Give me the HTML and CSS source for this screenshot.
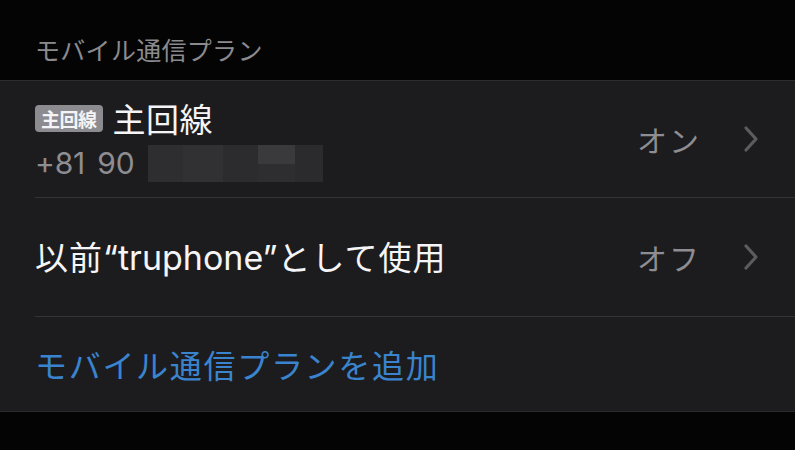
FILE: index.html
```html
<!DOCTYPE html>
<html lang="ja">
<head>
<meta charset="utf-8">
<link rel="stylesheet" href="styles.css">
</head>
<body>
<div class="screen">
  <div class="section-header">モバイル通信プラン</div>
  <div class="card">
    <div class="row row-tall">
      <div class="row-main">
        <div class="title-line">
          <span class="badge">主回線</span>
          <span class="title">主回線</span>
        </div>
        <div class="sub-line">
          <span class="number">+81 90</span>
          <span class="blur">
            <span class="b b1"></span><span class="b b2"></span><span class="b b3"></span><span class="b b4"></span><span class="b b5"></span>
          </span>
        </div>
      </div>
      <div class="detail">
        <span class="value">オン</span>
        <svg class="chev" width="20" height="28" viewBox="0 0 20 28"><polyline points="5,3 15,14 5,25" fill="none" stroke="#5b5b60" stroke-width="3.2" stroke-linecap="round" stroke-linejoin="round"/></svg>
      </div>
    </div>
    <div class="row row-mid">
      <div class="row-main">
        <span class="title title-wide">以前<span class="latin">“truphone”</span>として使用</span>
      </div>
      <div class="detail">
        <span class="value">オフ</span>
        <svg class="chev" width="20" height="28" viewBox="0 0 20 28"><polyline points="5,3 15,14 5,25" fill="none" stroke="#5b5b60" stroke-width="3.2" stroke-linecap="round" stroke-linejoin="round"/></svg>
      </div>
    </div>
    <div class="row row-last">
      <span class="link">モバイル通信プランを追加</span>
    </div>
  </div>
</div>
</body>
</html>
```
FILE: styles.css
```css
* { box-sizing: border-box; }
html, body { margin: 0; padding: 0; }
body {
  background: #040404;
  width: 795px;
  height: 450px;
  overflow: hidden;
  font-family: "Noto Sans CJK JP", "Noto Sans", sans-serif;
}
.screen { display: flex; flex-direction: column; }
.section-header {
  height: 80px;
  padding: 31px 0 0 35px;
  font-size: 25px;
  line-height: 36px;
  color: #8a8a8f;
  letter-spacing: 0.3px;
}
.card {
  background: #1c1c1e;
  border-top: 1px solid #2c2c2f;
  border-bottom: 1px solid #2a2a2d;
  display: flex;
  flex-direction: column;
}
.row {
  display: flex;
  align-items: center;
  margin-left: 35px;
  padding-right: 34px;
}
.row-tall { height: 117px; border-bottom: 1px solid #343437; }
.row-mid { height: 119px; border-bottom: 1px solid #343437; }
.row-last { height: 94px; }
.row-main { flex: 1; display: flex; flex-direction: column; }
.title-line { display: flex; align-items: center; gap: 10px; }
.badge {
  background: #8b8b90;
  color: #f4f4f6;
  font-size: 19px;
  font-weight: 700;
  line-height: 27px;
  padding: 0 6px;
  border-radius: 4px;
  letter-spacing: -0.5px;
}
.title {
  color: #f5f5f7;
  font-size: 33px;
  line-height: 44px;
  letter-spacing: 0.5px;
}
.title-wide { letter-spacing: 1px; }
.latin { font-family: "Inter", "Noto Sans CJK JP", sans-serif; font-size: 34px; letter-spacing: 0; }
.sub-line { display: flex; align-items: center; gap: 14px; margin-top: 4px; }
.number {
  font-family: "Inter", "Noto Sans", sans-serif;
  color: #8d8d92;
  font-size: 30px;
  line-height: 38px;
  letter-spacing: -0.2px;
  word-spacing: 4px;
}
.blur {
  display: flex;
  height: 37px;
  width: 175px;
  background: #29292c;
}
.b { display: block; height: 100%; }
.b1 { width: 35px; background: #2e2e31; }
.b2 { width: 40px; background: #313134; }
.b3 { width: 35px; background: #2c2c2f; }
.b4 { width: 37px; background: linear-gradient(#3a3a3d 0 50%, #2e2e31 50% 100%); }
.b5 { width: 28px; background: #2b2b2e; }
.detail { display: flex; align-items: center; gap: 40px; }
.value { color: #8d8d92; font-size: 30px; line-height: 40px; letter-spacing: 2px; }
.chev { display: block; }
.link {
  color: #3a84cf;
  font-size: 32px;
  line-height: 44px;
  letter-spacing: 1.7px;
}
```
